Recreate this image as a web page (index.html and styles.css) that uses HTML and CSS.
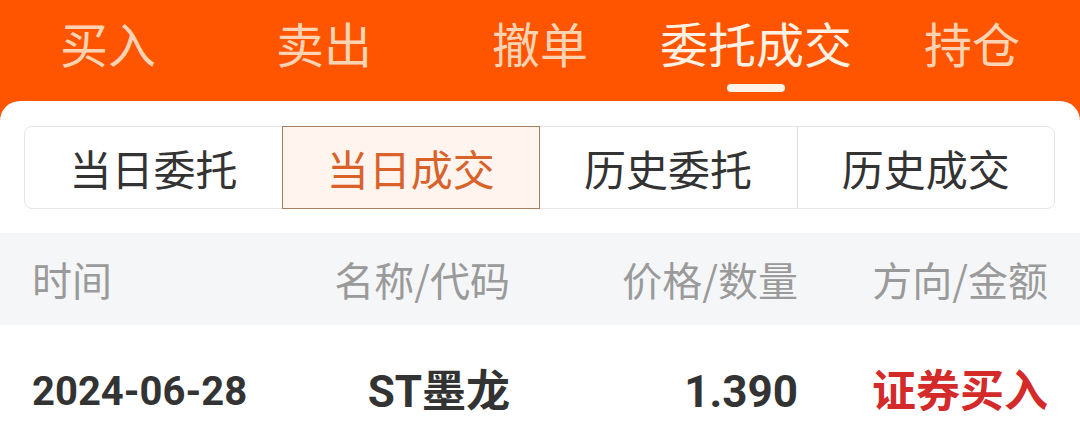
FILE: index.html
```html
<!DOCTYPE html>
<html lang="zh-CN">
<head>
    <meta charset="UTF-8">
    <meta name="viewport" content="width=device-width, initial-scale=1.0">
    <title>委托成交</title>
    <link rel="stylesheet" href="styles.css">
</head>
<body>

    <!-- 顶部导航 -->
    <div class="top-tabs">
        <div class="top-tab">买入</div>
        <div class="top-tab">卖出</div>
        <div class="top-tab">撤单</div>
        <div class="top-tab active">委托成交</div>
        <div class="top-tab">持仓</div>
    </div>

    <div class="card">
        <!-- 分段选择 -->
        <div class="segments">
            <div class="segment">当日委托</div>
            <div class="segment active">当日成交</div>
            <div class="segment">历史委托</div>
            <div class="segment">历史成交</div>
        </div>

        <!-- 表头 -->
        <div class="row head">
            <span class="col-time">时间</span>
            <span>名称/代码</span>
            <span>价格/数量</span>
            <span>方向/金额</span>
        </div>

        <!-- 成交记录 -->
        <div class="row item">
            <span class="col-time">2024-06-28</span>
            <span>ST墨龙</span>
            <span>1.390</span>
            <span class="buy">证券买入</span>
        </div>
    </div>

</body>
</html>
```

FILE: styles.css
```css
body {
    margin: 0;
    height: 100vh;
    background-color: #ff5500;
    font-family: 'Roboto', 'Noto Sans CJK SC', sans-serif;
    overflow: hidden;
}
.top-tabs {
    display: grid;
    grid-template-columns: repeat(5, 1fr);
    height: 101px;
}
.top-tab {
    position: relative;
    text-align: center;
    font-size: 48px;
    line-height: 48px;
    padding-top: 23px;
    color: #fdd3b4;
}
.top-tab.active {
    color: #fff1e4;
}
.top-tab.active::after {
    content: "";
    position: absolute;
    left: 50%;
    top: 84px;
    width: 58px;
    height: 8px;
    margin-left: -29px;
    border-radius: 4px;
    background-color: #fff3e8;
}
.card {
    box-sizing: border-box;
    background-color: #fff;
    border-radius: 20px 20px 0 0;
    height: 338px;
    padding-top: 25px;
}
.segments {
    display: grid;
    grid-template-columns: repeat(4, 1fr);
    margin: 0 25px 24px 24px;
    height: 83px;
    border: 1px solid #e6e6e6;
    border-radius: 8px;
    box-sizing: border-box;
}
.segment {
    display: flex;
    align-items: center;
    justify-content: center;
    font-family: 'Noto Sans CJK SC', sans-serif;
    font-size: 42px;
    color: #333;
    border-left: 1px solid #dedede;
}
.segment:first-child {
    border-left: none;
}
.segment.active {
    margin: -1px 0;
    border: 1px solid #a8805f;
    background-color: #fff4ee;
    color: #d9622a;
}
.segment.active + .segment {
    border-left: none;
}
.row {
    display: grid;
    grid-template-columns: 1fr 250px 288px 250px;
    align-items: center;
    padding: 0 32px;
    text-align: right;
}
.col-time {
    text-align: left;
}
.head {
    height: 92px;
    background-color: #f5f6f8;
    font-family: 'Noto Sans CJK SC', sans-serif;
    font-size: 40px;
    color: #9a9a9a;
}
.item {
    padding-top: 42px;
    font-size: 44px;
    line-height: 50px;
    font-weight: bold;
    color: #333;
}
.item .col-time {
    font-size: 40px;
}
.buy {
    color: #d42a2a;
}
```
